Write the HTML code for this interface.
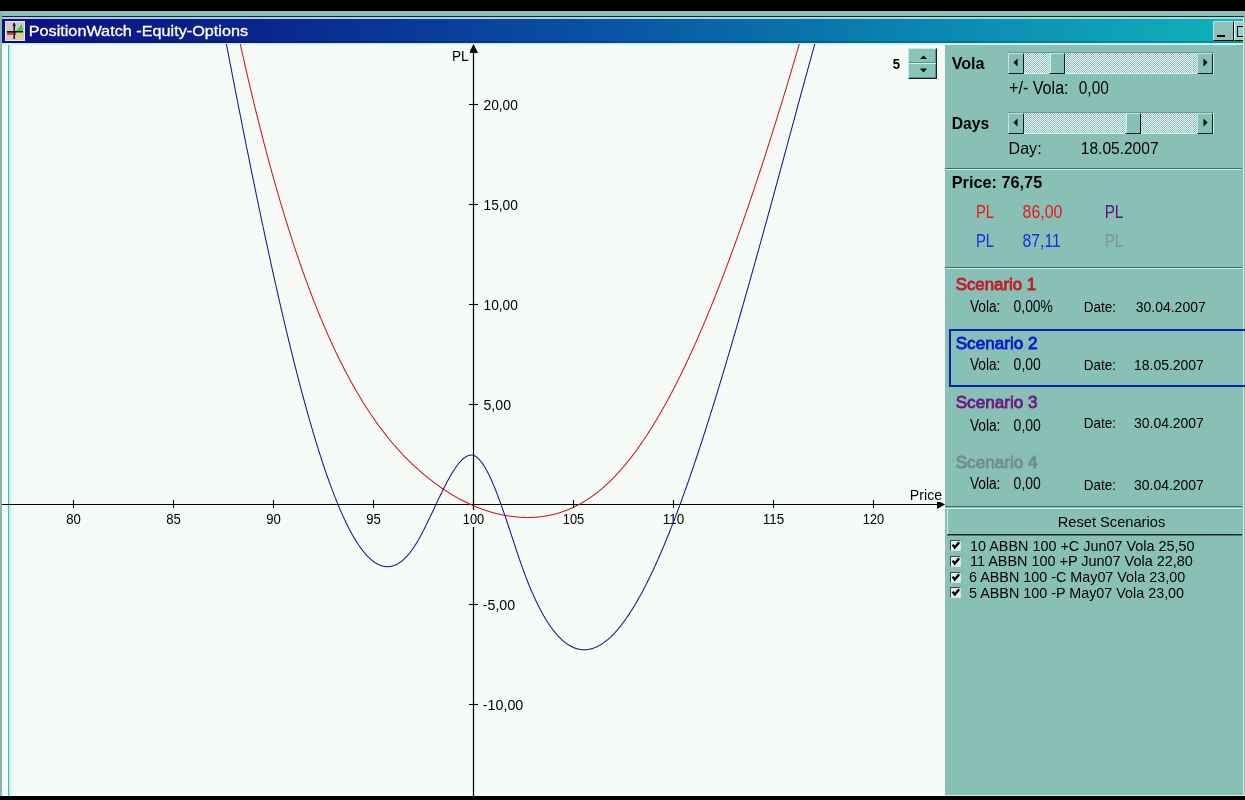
<!DOCTYPE html>
<html><head><meta charset="utf-8"><style>
*{margin:0;padding:0;box-sizing:border-box}
html,body{width:1245px;height:800px;overflow:hidden;background:#000;font-family:"Liberation Sans",sans-serif}
.a{position:absolute}
#band{left:0;top:11px;width:1245px;height:5px;background:#8cbfb6}
#dl{left:0;top:16px;width:1245px;height:1px;background:#102828}
#ll{left:0;top:17px;width:1245px;height:2px;background:linear-gradient(to right,#b0c8e8,#a8d4e0 50%,#a0dcd4)}
#title{left:2px;top:19px;width:1241px;height:24px;box-shadow:inset 0 -2px rgba(0,0,30,0.18);background:linear-gradient(to right,#0a1084 0%,#0a248c 20%,#0856a4 50%,#0a88b0 75%,#10b2bc 100%)}
#tl{left:2px;top:43px;width:1241px;height:2px;background:linear-gradient(#b8ecec,#e0f8f6)}
#chart{left:2px;top:44px;width:943px;height:752px;background:#f6fbf8}
#lstripe0{left:0;top:11px;width:2px;height:785px;background:#86b8b0}
#lstripe1{left:8px;top:44px;width:1px;height:752px;background:#40c0c0}
#lstripe2{left:9px;top:44px;width:2px;height:752px;background:#b0f4f4}
#panel{left:945px;top:44px;width:298px;height:751px;background:#88c0b6}
#rb{left:1243px;top:17px;width:1px;height:779px;background:#c0f0e8}
#rb2{left:1244px;top:11px;width:1px;height:785px;background:#88c0b6}
#bl{left:945px;top:795px;width:300px;height:1px;background:#c8f0e8}
.t{position:absolute;white-space:nowrap;color:#000}
.sep{position:absolute;left:945px;width:297px;height:2px;border-top:1px solid #407068;border-bottom:1px solid #c8f0e8}
.sb{position:absolute;left:1008px;width:205px;height:21px;background-color:#b8dcd6;background-image:conic-gradient(#eef8f6 25%,#88c0b8 0 50%,#eef8f6 0 75%,#88c0b8 0);background-size:2px 2px;border-bottom:1px solid #d8f4f0;box-shadow:0 -1px #649e96,1px 0 #c8eee8}
.sbb,.sbt{position:absolute;top:0;width:16px;height:21px;background:#88c0b8;border-top:1px solid #b8e8e0;border-left:1px solid #b8e8e0;border-right:1px solid #102020;border-bottom:1px solid #102020}
.sbt{box-shadow:inset 1px 0 #c8f0ea}
.cb{position:absolute;left:950px;width:11px;height:11px;background:#e4eeee;border-top:1px solid #305050;border-left:1px solid #305050;border-right:1px solid #c8ece4;border-bottom:1px solid #c8ece4}
#box2{position:absolute;left:949px;top:329px;width:296px;height:58px;border:2px solid #0a20b0;border-right:none}
#reset{position:absolute;left:947px;top:508px;width:295px;height:27px;border-top:1px solid #c8f0e8;border-left:1px solid #c8f0e8;border-bottom:1px solid #102020;box-shadow:0 1px #4a7a72}
#spin{position:absolute;left:908px;top:48px;width:29px;height:31px;background:#88c4b8;border-top:1px solid #c0f0e8;border-left:1px solid #c0f0e8;border-right:1px solid #102020;border-bottom:1px solid #102020;box-shadow:inset -1px -1px #5a9088}
#minb{position:absolute;left:1213px;top:21px;width:21px;height:20px;background:#90c0b8;border-top:1px solid #a0f0f8;border-left:1px solid #a0f0f8;border-right:1px solid #000;border-bottom:1px solid #000}
#maxb{position:absolute;left:1234px;top:21px;width:9px;height:20px;background:#a0d0c8;border-top:1px solid #c0f0f0;border-left:1px solid #e0ffff;border-bottom:1px solid #000}
</style></head><body>
<div class="a" id="band"></div>
<div class="a" id="dl"></div>
<div class="a" id="ll"></div>
<div class="a" id="title"></div>
<div class="a" id="lstripe0"></div>
<div class="a" id="chart"></div>
<div class="a" id="lstripe1"></div>
<div class="a" id="lstripe2"></div>
<div class="a" id="panel"></div>
<div class="a" id="tl"></div>
<div class="a" id="rb"></div>
<div class="a" id="rb2"></div>
<div class="a" id="bl"></div>
<svg class="a" style="left:5px;top:21px" width="20" height="20">
<rect x="0" y="0" width="20" height="20" fill="#e8e8f0"/>
<rect x="1" y="1" width="18" height="18" fill="#cfcad0"/>
<rect x="11" y="11" width="8" height="8" fill="#d8caa8"/>
<polygon points="11,10 18,10 17,3" fill="#30d040"/>
<rect x="2" y="11" width="9" height="3" fill="#e04030"/>
<rect x="2" y="10" width="16" height="1.5" fill="#101010"/>
<rect x="8.5" y="2" width="1.5" height="16" fill="#101010"/>
<polygon points="9.25,1.5 7.5,5 11,5" fill="#101010"/>
</svg>
<svg class="a" style="left:0;top:0" width="1245" height="800">
<line x1="2" y1="504.5" x2="940" y2="504.5" stroke="#000" stroke-width="1.2"/>
<line x1="473.5" y1="50" x2="473.5" y2="796" stroke="#000" stroke-width="1.2"/>
<g stroke="#000" stroke-width="1.1"><line x1="73.5" y1="500" x2="73.5" y2="508"/><line x1="173.5" y1="500" x2="173.5" y2="508"/><line x1="273.5" y1="500" x2="273.5" y2="508"/><line x1="373.5" y1="500" x2="373.5" y2="508"/><line x1="473.5" y1="500" x2="473.5" y2="508"/><line x1="573.5" y1="500" x2="573.5" y2="508"/><line x1="673.5" y1="500" x2="673.5" y2="508"/><line x1="773.5" y1="500" x2="773.5" y2="508"/><line x1="873.5" y1="500" x2="873.5" y2="508"/><line x1="469" y1="104.5" x2="478" y2="104.5"/><line x1="469" y1="204.5" x2="478" y2="204.5"/><line x1="469" y1="304.5" x2="478" y2="304.5"/><line x1="469" y1="404.5" x2="478" y2="404.5"/><line x1="469" y1="604.5" x2="478" y2="604.5"/><line x1="469" y1="704.5" x2="478" y2="704.5"/></g>
<polygon points="945,504.5 937,500 937,509" fill="#000"/>
<polygon points="473.5,44 469,53 478,53" fill="#000"/>
</svg>
<div class="a" style="left:65.2px;top:510px;width:16.6px;height:17px;background:#f6fbf8"></div><div class="a" style="left:165.2px;top:510px;width:16.6px;height:17px;background:#f6fbf8"></div><div class="a" style="left:265.2px;top:510px;width:16.6px;height:17px;background:#f6fbf8"></div><div class="a" style="left:365.2px;top:510px;width:16.6px;height:17px;background:#f6fbf8"></div><div class="a" style="left:461.8px;top:510px;width:23.5px;height:17px;background:#f6fbf8"></div><div class="a" style="left:561.8px;top:510px;width:23.5px;height:17px;background:#f6fbf8"></div><div class="a" style="left:661.8px;top:510px;width:23.5px;height:17px;background:#f6fbf8"></div><div class="a" style="left:761.8px;top:510px;width:23.5px;height:17px;background:#f6fbf8"></div><div class="a" style="left:861.8px;top:510px;width:23.5px;height:17px;background:#f6fbf8"></div><div class="a" style="left:450px;top:48px;width:20px;height:16px;background:#f6fbf8"></div><div class="a" style="left:908px;top:486px;width:36px;height:16px;background:#f6fbf8"></div>
<svg class="a" style="left:0;top:0;will-change:transform" width="1245" height="800" font-family="Liberation Sans"><text transform="translate(66.20,524) scale(0.8618,1)" font-size="15.26" fill="#000" xml:space="preserve">80</text>
<text transform="translate(166.20,524) scale(0.8618,1)" font-size="15.26" fill="#000" xml:space="preserve">85</text>
<text transform="translate(266.20,524) scale(0.8618,1)" font-size="15.26" fill="#000" xml:space="preserve">90</text>
<text transform="translate(366.20,524) scale(0.8618,1)" font-size="15.26" fill="#000" xml:space="preserve">95</text>
<text transform="translate(462.75,524) scale(0.8436,1)" font-size="15.26" fill="#000" xml:space="preserve">100</text>
<text transform="translate(562.75,524) scale(0.8436,1)" font-size="15.26" fill="#000" xml:space="preserve">105</text>
<text transform="translate(662.75,524) scale(0.8832,1)" font-size="15.26" fill="#000" xml:space="preserve">110</text>
<text transform="translate(762.75,524) scale(0.8832,1)" font-size="15.26" fill="#000" xml:space="preserve">115</text>
<text transform="translate(862.75,524) scale(0.8436,1)" font-size="15.26" fill="#000" xml:space="preserve">120</text>
<text transform="translate(483.50,110) scale(0.8830,1)" font-size="15.55" fill="#000" xml:space="preserve">20,00</text>
<text transform="translate(483.50,210) scale(0.8830,1)" font-size="15.55" fill="#000" xml:space="preserve">15,00</text>
<text transform="translate(483.50,310) scale(0.8830,1)" font-size="15.55" fill="#000" xml:space="preserve">10,00</text>
<text transform="translate(483.50,410) scale(0.9091,1)" font-size="15.55" fill="#000" xml:space="preserve">5,00</text>
<text transform="translate(482.75,610) scale(0.9165,1)" font-size="15.55" fill="#000" xml:space="preserve">-5,00</text>
<text transform="translate(482.75,710) scale(0.9208,1)" font-size="15.55" fill="#000" xml:space="preserve">-10,00</text>

<defs><clipPath id="cc"><rect x="2" y="44" width="943" height="752"/></clipPath></defs>
<g clip-path="url(#cc)">
<polyline points="232.00,5.39 232.50,7.79 233.00,10.17 233.50,12.55 234.00,14.93 234.50,17.29 235.00,19.65 235.50,21.99 236.00,24.33 236.50,26.67 237.00,28.99 237.50,31.31 238.00,33.61 238.50,35.91 239.00,38.21 239.50,40.49 240.00,42.77 240.50,45.03 241.00,47.30 241.50,49.55 242.00,51.79 242.50,54.03 243.00,56.26 243.50,58.48 244.00,60.70 244.50,62.90 245.00,65.10 245.50,67.29 246.00,69.47 246.50,71.65 247.00,73.82 247.50,75.98 248.00,78.13 248.50,80.27 249.00,82.41 249.50,84.54 250.00,86.66 250.50,88.78 251.00,90.88 251.50,92.98 252.00,95.08 252.50,97.16 253.00,99.24 253.50,101.31 254.00,103.37 254.50,105.42 255.00,107.47 255.50,109.51 256.00,111.54 256.50,113.57 257.00,115.59 257.50,117.60 258.00,119.60 258.50,121.60 259.00,123.58 259.50,125.57 260.00,127.54 260.50,129.51 261.00,131.47 261.50,133.42 262.00,135.36 262.50,137.30 263.00,139.23 263.50,141.16 264.00,143.07 264.50,144.98 265.00,146.88 265.50,148.78 266.00,150.67 266.50,152.55 267.00,154.42 267.50,156.29 268.00,158.15 268.50,160.00 269.00,161.85 269.50,163.69 270.00,165.52 270.50,167.34 271.00,169.16 271.50,170.97 272.00,172.78 272.50,174.57 273.00,176.36 273.50,178.15 274.00,179.93 274.50,181.70 275.00,183.46 275.50,185.22 276.00,186.97 276.50,188.71 277.00,190.44 277.50,192.17 278.00,193.90 278.50,195.61 279.00,197.32 279.50,199.03 280.00,200.72 280.50,202.41 281.00,204.09 281.50,205.77 282.00,207.44 282.50,209.10 283.00,210.76 283.50,212.41 284.00,214.05 284.50,215.69 285.00,217.32 285.50,218.95 286.00,220.56 286.50,222.17 287.00,223.78 287.50,225.38 288.00,226.97 288.50,228.56 289.00,230.13 289.50,231.71 290.00,233.27 290.50,234.83 291.00,236.39 291.50,237.94 292.00,239.48 292.50,241.01 293.00,242.54 293.50,244.06 294.00,245.58 294.50,247.09 295.00,248.59 295.50,250.09 296.00,251.58 296.50,253.07 297.00,254.55 297.50,256.02 298.00,257.49 298.50,258.95 299.00,260.41 299.50,261.86 300.00,263.30 300.50,264.74 301.00,266.17 301.50,267.59 302.00,269.01 302.50,270.42 303.00,271.83 303.50,273.23 304.00,274.63 304.50,276.02 305.00,277.40 305.50,278.78 306.00,280.15 306.50,281.52 307.00,282.88 307.50,284.23 308.00,285.58 308.50,286.92 309.00,288.26 309.50,289.59 310.00,290.92 310.50,292.24 311.00,293.55 311.50,294.86 312.00,296.17 312.50,297.46 313.00,298.75 313.50,300.04 314.00,301.32 314.50,302.60 315.00,303.87 315.50,305.13 316.00,306.39 316.50,307.64 317.00,308.89 317.50,310.13 318.00,311.37 318.50,312.60 319.00,313.82 319.50,315.04 320.00,316.26 320.50,317.47 321.00,318.67 321.50,319.87 322.00,321.06 322.50,322.25 323.00,323.43 323.50,324.61 324.00,325.78 324.50,326.95 325.00,328.11 325.50,329.27 326.00,330.42 326.50,331.56 327.00,332.70 327.50,333.84 328.00,334.97 328.50,336.09 329.00,337.21 329.50,338.33 330.00,339.44 330.50,340.54 331.00,341.64 331.50,342.74 332.00,343.83 332.50,344.91 333.00,345.99 333.50,347.07 334.00,348.13 334.50,349.20 335.00,350.26 335.50,351.31 336.00,352.36 336.50,353.41 337.00,354.45 337.50,355.48 338.00,356.51 338.50,357.54 339.00,358.56 339.50,359.57 340.00,360.58 340.50,361.59 341.00,362.59 341.50,363.59 342.00,364.58 342.50,365.57 343.00,366.55 343.50,367.53 344.00,368.50 344.50,369.47 345.00,370.43 345.50,371.39 346.00,372.35 346.50,373.30 347.00,374.24 347.50,375.18 348.00,376.12 348.50,377.05 349.00,377.98 349.50,378.90 350.00,379.82 350.50,380.73 351.00,381.64 351.50,382.55 352.00,383.45 352.50,384.34 353.00,385.24 353.50,386.12 354.00,387.01 354.50,387.88 355.00,388.76 355.50,389.63 356.00,390.49 356.50,391.36 357.00,392.21 357.50,393.07 358.00,393.91 358.50,394.76 359.00,395.60 359.50,396.43 360.00,397.27 360.50,398.09 361.00,398.92 361.50,399.74 362.00,400.55 362.50,401.36 363.00,402.17 363.50,402.97 364.00,403.77 364.50,404.57 365.00,405.36 365.50,406.14 366.00,406.93 366.50,407.70 367.00,408.48 367.50,409.25 368.00,410.02 368.50,410.78 369.00,411.54 369.50,412.29 370.00,413.05 370.50,413.79 371.00,414.54 371.50,415.28 372.00,416.01 372.50,416.74 373.00,417.47 373.50,418.20 374.00,418.92 374.50,419.63 375.00,420.35 375.50,421.06 376.00,421.76 376.50,422.46 377.00,423.16 377.50,423.86 378.00,424.55 378.50,425.24 379.00,425.92 379.50,426.60 380.00,427.28 380.50,427.95 381.00,428.62 381.50,429.28 382.00,429.95 382.50,430.61 383.00,431.26 383.50,431.91 384.00,432.56 384.50,433.21 385.00,433.85 385.50,434.49 386.00,435.12 386.50,435.75 387.00,436.38 387.50,437.00 388.00,437.63 388.50,438.24 389.00,438.86 389.50,439.47 390.00,440.08 390.50,440.68 391.00,441.28 391.50,441.88 392.00,442.48 392.50,443.07 393.00,443.66 393.50,444.24 394.00,444.83 394.50,445.40 395.00,445.98 395.50,446.55 396.00,447.12 396.50,447.69 397.00,448.25 397.50,448.81 398.00,449.37 398.50,449.93 399.00,450.48 399.50,451.03 400.00,451.57 400.50,452.11 401.00,452.65 401.50,453.19 402.00,453.72 402.50,454.25 403.00,454.78 403.50,455.31 404.00,455.83 404.50,456.35 405.00,456.86 405.50,457.38 406.00,457.89 406.50,458.40 407.00,458.90 407.50,459.40 408.00,459.90 408.50,460.40 409.00,460.89 409.50,461.39 410.00,461.87 410.50,462.36 411.00,462.84 411.50,463.32 412.00,463.80 412.50,464.28 413.00,464.75 413.50,465.22 414.00,465.69 414.50,466.15 415.00,466.62 415.50,467.08 416.00,467.54 416.50,467.99 417.00,468.44 417.50,468.89 418.00,469.34 418.50,469.79 419.00,470.23 419.50,470.67 420.00,471.11 420.50,471.54 421.00,471.98 421.50,472.41 422.00,472.84 422.50,473.26 423.00,473.69 423.50,474.11 424.00,474.53 424.50,474.95 425.00,475.36 425.50,475.77 426.00,476.18 426.50,476.59 427.00,477.00 427.50,477.40 428.00,477.80 428.50,478.20 429.00,478.60 429.50,479.00 430.00,479.39 430.50,479.78 431.00,480.17 431.50,480.56 432.00,480.94 432.50,481.33 433.00,481.71 433.50,482.09 434.00,482.46 434.50,482.84 435.00,483.21 435.50,483.58 436.00,483.95 436.50,484.32 437.00,484.68 437.50,485.04 438.00,485.40 438.50,485.76 439.00,486.12 439.50,486.47 440.00,486.82 440.50,487.17 441.00,487.52 441.50,487.87 442.00,488.21 442.50,488.55 443.00,488.89 443.50,489.23 444.00,489.57 444.50,489.90 445.00,490.23 445.50,490.56 446.00,490.89 446.50,491.21 447.00,491.54 447.50,491.86 448.00,492.18 448.50,492.50 449.00,492.81 449.50,493.12 450.00,493.43 450.50,493.74 451.00,494.05 451.50,494.36 452.00,494.66 452.50,494.96 453.00,495.26 453.50,495.55 454.00,495.85 454.50,496.14 455.00,496.43 455.50,496.72 456.00,497.01 456.50,497.29 457.00,497.57 457.50,497.85 458.00,498.13 458.50,498.41 459.00,498.68 459.50,498.96 460.00,499.23 460.50,499.49 461.00,499.76 461.50,500.03 462.00,500.29 462.50,500.55 463.00,500.81 463.50,501.06 464.00,501.32 464.50,501.57 465.00,501.82 465.50,502.07 466.00,502.31 466.50,502.56 467.00,502.80 467.50,503.04 468.00,503.28 468.50,503.51 469.00,503.75 469.50,503.98 470.00,504.21 470.50,504.44 471.00,504.66 471.50,504.89 472.00,505.11 472.50,505.33 473.00,505.55 473.50,505.76 474.00,505.97 474.50,506.19 475.00,506.40 475.50,506.60 476.00,506.81 476.50,507.01 477.00,507.22 477.50,507.42 478.00,507.61 478.50,507.81 479.00,508.00 479.50,508.20 480.00,508.38 480.50,508.57 481.00,508.76 481.50,508.94 482.00,509.12 482.50,509.30 483.00,509.48 483.50,509.66 484.00,509.83 484.50,510.00 485.00,510.17 485.50,510.34 486.00,510.51 486.50,510.67 487.00,510.83 487.50,510.99 488.00,511.15 488.50,511.31 489.00,511.46 489.50,511.61 490.00,511.76 490.50,511.91 491.00,512.06 491.50,512.20 492.00,512.35 492.50,512.49 493.00,512.62 493.50,512.76 494.00,512.89 494.50,513.03 495.00,513.16 495.50,513.29 496.00,513.41 496.50,513.54 497.00,513.66 497.50,513.78 498.00,513.90 498.50,514.02 499.00,514.13 499.50,514.24 500.00,514.35 500.50,514.46 501.00,514.57 501.50,514.67 502.00,514.78 502.50,514.88 503.00,514.98 503.50,515.07 504.00,515.17 504.50,515.26 505.00,515.35 505.50,515.44 506.00,515.53 506.50,515.62 507.00,515.70 507.50,515.78 508.00,515.86 508.50,515.94 509.00,516.01 509.50,516.09 510.00,516.16 510.50,516.23 511.00,516.30 511.50,516.36 512.00,516.43 512.50,516.49 513.00,516.55 513.50,516.61 514.00,516.66 514.50,516.72 515.00,516.77 515.50,516.82 516.00,516.87 516.50,516.91 517.00,516.96 517.50,517.00 518.00,517.04 518.50,517.08 519.00,517.12 519.50,517.15 520.00,517.19 520.50,517.22 521.00,517.24 521.50,517.27 522.00,517.30 522.50,517.32 523.00,517.34 523.50,517.36 524.00,517.38 524.50,517.39 525.00,517.40 525.50,517.41 526.00,517.42 526.50,517.43 527.00,517.43 527.50,517.44 528.00,517.44 528.50,517.44 529.00,517.43 529.50,517.42 530.00,517.42 530.50,517.41 531.00,517.39 531.50,517.38 532.00,517.36 532.50,517.34 533.00,517.32 533.50,517.30 534.00,517.27 534.50,517.24 535.00,517.21 535.50,517.18 536.00,517.14 536.50,517.11 537.00,517.07 537.50,517.02 538.00,516.98 538.50,516.93 539.00,516.88 539.50,516.83 540.00,516.78 540.50,516.72 541.00,516.66 541.50,516.60 542.00,516.54 542.50,516.47 543.00,516.41 543.50,516.34 544.00,516.26 544.50,516.19 545.00,516.11 545.50,516.03 546.00,515.95 546.50,515.86 547.00,515.77 547.50,515.68 548.00,515.59 548.50,515.49 549.00,515.40 549.50,515.30 550.00,515.19 550.50,515.09 551.00,514.98 551.50,514.87 552.00,514.76 552.50,514.64 553.00,514.52 553.50,514.40 554.00,514.28 554.50,514.15 555.00,514.02 555.50,513.89 556.00,513.75 556.50,513.62 557.00,513.48 557.50,513.33 558.00,513.19 558.50,513.04 559.00,512.89 559.50,512.74 560.00,512.58 560.50,512.42 561.00,512.26 561.50,512.09 562.00,511.93 562.50,511.75 563.00,511.58 563.50,511.41 564.00,511.23 564.50,511.05 565.00,510.86 565.50,510.67 566.00,510.48 566.50,510.29 567.00,510.09 567.50,509.89 568.00,509.69 568.50,509.49 569.00,509.28 569.50,509.07 570.00,508.85 570.50,508.64 571.00,508.42 571.50,508.20 572.00,507.97 572.50,507.74 573.00,507.51 573.50,507.27 574.00,507.04 574.50,506.80 575.00,506.55 575.50,506.31 576.00,506.05 576.50,505.80 577.00,505.55 577.50,505.29 578.00,505.02 578.50,504.76 579.00,504.49 579.50,504.22 580.00,503.94 580.50,503.66 581.00,503.38 581.50,503.10 582.00,502.81 582.50,502.52 583.00,502.22 583.50,501.93 584.00,501.63 584.50,501.32 585.00,501.01 585.50,500.70 586.00,500.39 586.50,500.07 587.00,499.75 587.50,499.43 588.00,499.10 588.50,498.77 589.00,498.44 589.50,498.10 590.00,497.76 590.50,497.42 591.00,497.07 591.50,496.72 592.00,496.36 592.50,496.01 593.00,495.64 593.50,495.28 594.00,494.91 594.50,494.54 595.00,494.17 595.50,493.79 596.00,493.41 596.50,493.02 597.00,492.63 597.50,492.24 598.00,491.85 598.50,491.45 599.00,491.04 599.50,490.64 600.00,490.23 600.50,489.81 601.00,489.40 601.50,488.98 602.00,488.55 602.50,488.12 603.00,487.69 603.50,487.26 604.00,486.82 604.50,486.38 605.00,485.93 605.50,485.48 606.00,485.03 606.50,484.57 607.00,484.11 607.50,483.64 608.00,483.18 608.50,482.70 609.00,482.23 609.50,481.75 610.00,481.26 610.50,480.78 611.00,480.29 611.50,479.79 612.00,479.29 612.50,478.79 613.00,478.28 613.50,477.77 614.00,477.26 614.50,476.74 615.00,476.22 615.50,475.70 616.00,475.17 616.50,474.63 617.00,474.10 617.50,473.56 618.00,473.01 618.50,472.47 619.00,471.91 619.50,471.36 620.00,470.80 620.50,470.23 621.00,469.67 621.50,469.10 622.00,468.52 622.50,467.94 623.00,467.36 623.50,466.77 624.00,466.18 624.50,465.59 625.00,464.99 625.50,464.39 626.00,463.79 626.50,463.18 627.00,462.56 627.50,461.95 628.00,461.33 628.50,460.70 629.00,460.07 629.50,459.44 630.00,458.81 630.50,458.17 631.00,457.52 631.50,456.88 632.00,456.23 632.50,455.57 633.00,454.91 633.50,454.25 634.00,453.59 634.50,452.92 635.00,452.24 635.50,451.57 636.00,450.88 636.50,450.20 637.00,449.51 637.50,448.82 638.00,448.12 638.50,447.42 639.00,446.72 639.50,446.01 640.00,445.30 640.50,444.58 641.00,443.87 641.50,443.14 642.00,442.42 642.50,441.69 643.00,440.95 643.50,440.22 644.00,439.47 644.50,438.73 645.00,437.98 645.50,437.23 646.00,436.47 646.50,435.71 647.00,434.95 647.50,434.18 648.00,433.41 648.50,432.63 649.00,431.85 649.50,431.07 650.00,430.28 650.50,429.49 651.00,428.70 651.50,427.90 652.00,427.10 652.50,426.29 653.00,425.49 653.50,424.67 654.00,423.86 654.50,423.04 655.00,422.21 655.50,421.38 656.00,420.55 656.50,419.72 657.00,418.88 657.50,418.03 658.00,417.19 658.50,416.34 659.00,415.48 659.50,414.63 660.00,413.77 660.50,412.90 661.00,412.03 661.50,411.16 662.00,410.28 662.50,409.40 663.00,408.52 663.50,407.63 664.00,406.74 664.50,405.84 665.00,404.95 665.50,404.04 666.00,403.14 666.50,402.23 667.00,401.31 667.50,400.40 668.00,399.47 668.50,398.55 669.00,397.62 669.50,396.69 670.00,395.75 670.50,394.81 671.00,393.87 671.50,392.92 672.00,391.97 672.50,391.02 673.00,390.06 673.50,389.10 674.00,388.13 674.50,387.16 675.00,386.19 675.50,385.21 676.00,384.23 676.50,383.25 677.00,382.26 677.50,381.27 678.00,380.27 678.50,379.27 679.00,378.27 679.50,377.27 680.00,376.26 680.50,375.24 681.00,374.22 681.50,373.20 682.00,372.18 682.50,371.15 683.00,370.12 683.50,369.08 684.00,368.04 684.50,367.00 685.00,365.95 685.50,364.90 686.00,363.85 686.50,362.79 687.00,361.73 687.50,360.66 688.00,359.59 688.50,358.52 689.00,357.45 689.50,356.37 690.00,355.28 690.50,354.20 691.00,353.11 691.50,352.01 692.00,350.91 692.50,349.81 693.00,348.71 693.50,347.60 694.00,346.49 694.50,345.37 695.00,344.25 695.50,343.13 696.00,342.01 696.50,340.88 697.00,339.74 697.50,338.61 698.00,337.47 698.50,336.32 699.00,335.18 699.50,334.03 700.00,332.87 700.50,331.72 701.00,330.56 701.50,329.39 702.00,328.22 702.50,327.05 703.00,325.88 703.50,324.70 704.00,323.52 704.50,322.33 705.00,321.15 705.50,319.96 706.00,318.76 706.50,317.56 707.00,316.36 707.50,315.16 708.00,313.95 708.50,312.74 709.00,311.52 709.50,310.30 710.00,309.08 710.50,307.86 711.00,306.63 711.50,305.40 712.00,304.16 712.50,302.92 713.00,301.68 713.50,300.44 714.00,299.19 714.50,297.94 715.00,296.68 715.50,295.43 716.00,294.17 716.50,292.90 717.00,291.63 717.50,290.36 718.00,289.09 718.50,287.81 719.00,286.53 719.50,285.25 720.00,283.96 720.50,282.67 721.00,281.38 721.50,280.08 722.00,278.78 722.50,277.48 723.00,276.17 723.50,274.87 724.00,273.55 724.50,272.24 725.00,270.92 725.50,269.60 726.00,268.27 726.50,266.95 727.00,265.62 727.50,264.28 728.00,262.95 728.50,261.61 729.00,260.26 729.50,258.92 730.00,257.57 730.50,256.22 731.00,254.86 731.50,253.50 732.00,252.14 732.50,250.78 733.00,249.41 733.50,248.04 734.00,246.66 734.50,245.29 735.00,243.91 735.50,242.53 736.00,241.14 736.50,239.75 737.00,238.36 737.50,236.97 738.00,235.57 738.50,234.17 739.00,232.77 739.50,231.36 740.00,229.95 740.50,228.54 741.00,227.13 741.50,225.71 742.00,224.29 742.50,222.86 743.00,221.44 743.50,220.01 744.00,218.58 744.50,217.14 745.00,215.70 745.50,214.26 746.00,212.82 746.50,211.37 747.00,209.92 747.50,208.47 748.00,207.02 748.50,205.56 749.00,204.10 749.50,202.64 750.00,201.17 750.50,199.70 751.00,198.23 751.50,196.76 752.00,195.28 752.50,193.80 753.00,192.32 753.50,190.83 754.00,189.34 754.50,187.85 755.00,186.36 755.50,184.86 756.00,183.36 756.50,181.86 757.00,180.36 757.50,178.85 758.00,177.34 758.50,175.83 759.00,174.31 759.50,172.80 760.00,171.28 760.50,169.75 761.00,168.23 761.50,166.70 762.00,165.17 762.50,163.63 763.00,162.10 763.50,160.56 764.00,159.02 764.50,157.47 765.00,155.93 765.50,154.38 766.00,152.83 766.50,151.27 767.00,149.72 767.50,148.16 768.00,146.59 768.50,145.03 769.00,143.46 769.50,141.89 770.00,140.32 770.50,138.75 771.00,137.17 771.50,135.59 772.00,134.01 772.50,132.42 773.00,130.84 773.50,129.25 774.00,127.66 774.50,126.06 775.00,124.46 775.50,122.86 776.00,121.26 776.50,119.66 777.00,118.05 777.50,116.44 778.00,114.83 778.50,113.22 779.00,111.60 779.50,109.98 780.00,108.36 780.50,106.74 781.00,105.11 781.50,103.48 782.00,101.85 782.50,100.22 783.00,98.59 783.50,96.95 784.00,95.31 784.50,93.67 785.00,92.02 785.50,90.38 786.00,88.73 786.50,87.07 787.00,85.42 787.50,83.76 788.00,82.11 788.50,80.45 789.00,78.78 789.50,77.12 790.00,75.45 790.50,73.78 791.00,72.11 791.50,70.44 792.00,68.76 792.50,67.08 793.00,65.40 793.50,63.72 794.00,62.03 794.50,60.35 795.00,58.66 795.50,56.96 796.00,55.27 796.50,53.57 797.00,51.88 797.50,50.18 798.00,48.47 798.50,46.77 799.00,45.06 799.50,43.35 800.00,41.64 800.50,39.93 801.00,38.21 801.50,36.50 802.00,34.78 802.50,33.06 803.00,31.33 803.50,29.61 804.00,27.88 804.50,26.15 805.00,24.42 805.50,22.68 806.00,20.95" fill="none" stroke="#c81a1a" stroke-width="1.05"/>
<polyline points="220.00,10.85 220.50,13.47 221.00,16.08 221.50,18.69 222.00,21.30 222.50,23.90 223.00,26.51 223.50,29.11 224.00,31.72 224.50,34.32 225.00,36.92 225.50,39.51 226.00,42.11 226.50,44.70 227.00,47.29 227.50,49.88 228.00,52.47 228.50,55.06 229.00,57.64 229.50,60.23 230.00,62.81 230.50,65.38 231.00,67.96 231.50,70.53 232.00,73.10 232.50,75.67 233.00,78.24 233.50,80.80 234.00,83.37 234.50,85.92 235.00,88.48 235.50,91.04 236.00,93.59 236.50,96.14 237.00,98.68 237.50,101.23 238.00,103.77 238.50,106.31 239.00,108.84 239.50,111.38 240.00,113.91 240.50,116.43 241.00,118.96 241.50,121.48 242.00,124.00 242.50,126.51 243.00,129.02 243.50,131.53 244.00,134.04 244.50,136.54 245.00,139.04 245.50,141.54 246.00,144.03 246.50,146.52 247.00,149.00 247.50,151.49 248.00,153.97 248.50,156.44 249.00,158.91 249.50,161.38 250.00,163.84 250.50,166.31 251.00,168.76 251.50,171.22 252.00,173.67 252.50,176.11 253.00,178.55 253.50,180.99 254.00,183.42 254.50,185.85 255.00,188.28 255.50,190.70 256.00,193.12 256.50,195.53 257.00,197.94 257.50,200.35 258.00,202.75 258.50,205.14 259.00,207.54 259.50,209.92 260.00,212.31 260.50,214.69 261.00,217.06 261.50,219.43 262.00,221.79 262.50,224.16 263.00,226.51 263.50,228.86 264.00,231.21 264.50,233.55 265.00,235.89 265.50,238.22 266.00,240.55 266.50,242.87 267.00,245.18 267.50,247.50 268.00,249.80 268.50,252.11 269.00,254.40 269.50,256.69 270.00,258.98 270.50,261.26 271.00,263.54 271.50,265.81 272.00,268.07 272.50,270.33 273.00,272.59 273.50,274.84 274.00,277.08 274.50,279.32 275.00,281.55 275.50,283.78 276.00,286.00 276.50,288.21 277.00,290.42 277.50,292.62 278.00,294.82 278.50,297.01 279.00,299.20 279.50,301.38 280.00,303.55 280.50,305.72 281.00,307.88 281.50,310.04 282.00,312.19 282.50,314.33 283.00,316.47 283.50,318.60 284.00,320.72 284.50,322.84 285.00,324.95 285.50,327.06 286.00,329.16 286.50,331.25 287.00,333.34 287.50,335.41 288.00,337.49 288.50,339.55 289.00,341.61 289.50,343.67 290.00,345.71 290.50,347.75 291.00,349.78 291.50,351.81 292.00,353.83 292.50,355.84 293.00,357.84 293.50,359.84 294.00,361.83 294.50,363.81 295.00,365.79 295.50,367.76 296.00,369.72 296.50,371.67 297.00,373.62 297.50,375.56 298.00,377.49 298.50,379.41 299.00,381.33 299.50,383.24 300.00,385.14 300.50,387.04 301.00,388.92 301.50,390.80 302.00,392.67 302.50,394.54 303.00,396.39 303.50,398.24 304.00,400.08 304.50,401.91 305.00,403.74 305.50,405.55 306.00,407.36 306.50,409.16 307.00,410.95 307.50,412.74 308.00,414.51 308.50,416.28 309.00,418.04 309.50,419.79 310.00,421.53 310.50,423.27 311.00,424.99 311.50,426.71 312.00,428.42 312.50,430.12 313.00,431.81 313.50,433.50 314.00,435.17 314.50,436.84 315.00,438.49 315.50,440.14 316.00,441.78 316.50,443.41 317.00,445.03 317.50,446.65 318.00,448.25 318.50,449.84 319.00,451.43 319.50,453.01 320.00,454.57 320.50,456.13 321.00,457.68 321.50,459.22 322.00,460.75 322.50,462.27 323.00,463.79 323.50,465.29 324.00,466.78 324.50,468.27 325.00,469.74 325.50,471.20 326.00,472.66 326.50,474.11 327.00,475.54 327.50,476.97 328.00,478.38 328.50,479.79 329.00,481.19 329.50,482.57 330.00,483.95 330.50,485.32 331.00,486.67 331.50,488.02 332.00,489.36 332.50,490.68 333.00,492.00 333.50,493.31 334.00,494.60 334.50,495.89 335.00,497.17 335.50,498.43 336.00,499.69 336.50,500.93 337.00,502.17 337.50,503.39 338.00,504.60 338.50,505.80 339.00,507.00 339.50,508.18 340.00,509.35 340.50,510.51 341.00,511.66 341.50,512.80 342.00,513.92 342.50,515.04 343.00,516.15 343.50,517.24 344.00,518.32 344.50,519.40 345.00,520.46 345.50,521.51 346.00,522.55 346.50,523.58 347.00,524.59 347.50,525.60 348.00,526.59 348.50,527.58 349.00,528.55 349.50,529.51 350.00,530.46 350.50,531.39 351.00,532.32 351.50,533.23 352.00,534.14 352.50,535.03 353.00,535.91 353.50,536.77 354.00,537.63 354.50,538.47 355.00,539.30 355.50,540.12 356.00,540.93 356.50,541.73 357.00,542.51 357.50,543.28 358.00,544.05 358.50,544.79 359.00,545.53 359.50,546.25 360.00,546.96 360.50,547.66 361.00,548.35 361.50,549.03 362.00,549.69 362.50,550.34 363.00,550.98 363.50,551.61 364.00,552.22 364.50,552.82 365.00,553.41 365.50,553.99 366.00,554.55 366.50,555.10 367.00,555.64 367.50,556.17 368.00,556.68 368.50,557.19 369.00,557.67 369.50,558.15 370.00,558.62 370.50,559.07 371.00,559.51 371.50,559.93 372.00,560.34 372.50,560.74 373.00,561.13 373.50,561.51 374.00,561.87 374.50,562.22 375.00,562.56 375.50,562.88 376.00,563.19 376.50,563.49 377.00,563.77 377.50,564.04 378.00,564.30 378.50,564.55 379.00,564.78 379.50,565.00 380.00,565.20 380.50,565.40 381.00,565.58 381.50,565.74 382.00,565.90 382.50,566.04 383.00,566.16 383.50,566.28 384.00,566.38 384.50,566.46 385.00,566.54 385.50,566.60 386.00,566.64 386.50,566.68 387.00,566.70 387.50,566.70 388.00,566.70 388.50,566.67 389.00,566.64 389.50,566.59 390.00,566.53 390.50,566.45 391.00,566.37 391.50,566.26 392.00,566.15 392.50,566.02 393.00,565.87 393.50,565.71 394.00,565.54 394.50,565.36 395.00,565.16 395.50,564.94 396.00,564.72 396.50,564.47 397.00,564.22 397.50,563.95 398.00,563.67 398.50,563.37 399.00,563.06 399.50,562.73 400.00,562.39 400.50,562.04 401.00,561.67 401.50,561.29 402.00,560.89 402.50,560.48 403.00,560.05 403.50,559.61 404.00,559.16 404.50,558.69 405.00,558.21 405.50,557.71 406.00,557.20 406.50,556.67 407.00,556.13 407.50,555.58 408.00,555.01 408.50,554.43 409.00,553.83 409.50,553.21 410.00,552.59 410.50,551.94 411.00,551.29 411.50,550.61 412.00,549.93 412.50,549.23 413.00,548.51 413.50,547.78 414.00,547.03 414.50,546.27 415.00,545.49 415.50,544.70 416.00,543.90 416.50,543.08 417.00,542.25 417.50,541.40 418.00,540.55 418.50,539.68 419.00,538.79 419.50,537.90 420.00,537.00 420.50,536.08 421.00,535.16 421.50,534.22 422.00,533.27 422.50,532.32 423.00,531.35 423.50,530.38 424.00,529.40 424.50,528.41 425.00,527.42 425.50,526.42 426.00,525.41 426.50,524.39 427.00,523.37 427.50,522.34 428.00,521.31 428.50,520.27 429.00,519.23 429.50,518.19 430.00,517.14 430.50,516.09 431.00,515.03 431.50,513.97 432.00,512.92 432.50,511.85 433.00,510.79 433.50,509.73 434.00,508.67 434.50,507.60 435.00,506.54 435.50,505.47 436.00,504.41 436.50,503.35 437.00,502.29 437.50,501.24 438.00,500.18 438.50,499.13 439.00,498.08 439.50,497.04 440.00,495.99 440.50,494.96 441.00,493.93 441.50,492.90 442.00,491.88 442.50,490.86 443.00,489.86 443.50,488.85 444.00,487.86 444.50,486.87 445.00,485.89 445.50,484.92 446.00,483.95 446.50,483.00 447.00,482.06 447.50,481.12 448.00,480.19 448.50,479.28 449.00,478.38 449.50,477.48 450.00,476.60 450.50,475.73 451.00,474.88 451.50,474.03 452.00,473.20 452.50,472.38 453.00,471.58 453.50,470.79 454.00,470.01 454.50,469.25 455.00,468.51 455.50,467.78 456.00,467.07 456.50,466.37 457.00,465.69 457.50,465.03 458.00,464.39 458.50,463.76 459.00,463.15 459.50,462.56 460.00,461.99 460.50,461.44 461.00,460.91 461.50,460.40 462.00,459.91 462.50,459.45 463.00,459.00 463.50,458.57 464.00,458.17 464.50,457.79 465.00,457.43 465.50,457.10 466.00,456.79 466.50,456.50 467.00,456.24 467.50,456.01 468.00,455.80 468.50,455.61 469.00,455.45 469.50,455.32 470.00,455.21 470.50,455.13 471.00,455.08 471.50,455.05 472.00,455.06 472.50,455.09 473.00,455.15 473.50,455.24 474.00,455.46 474.50,455.70 475.00,455.98 475.50,456.28 476.00,456.62 476.50,456.98 477.00,457.38 477.50,457.81 478.00,458.26 478.50,458.75 479.00,459.26 479.50,459.81 480.00,460.38 480.50,460.98 481.00,461.60 481.50,462.25 482.00,462.93 482.50,463.64 483.00,464.37 483.50,465.12 484.00,465.90 484.50,466.70 485.00,467.53 485.50,468.38 486.00,469.26 486.50,470.16 487.00,471.08 487.50,472.02 488.00,472.98 488.50,473.97 489.00,474.97 489.50,476.00 490.00,477.05 490.50,478.11 491.00,479.20 491.50,480.30 492.00,481.42 492.50,482.57 493.00,483.72 493.50,484.90 494.00,486.09 494.50,487.30 495.00,488.53 495.50,489.77 496.00,491.02 496.50,492.29 497.00,493.58 497.50,494.88 498.00,496.19 498.50,497.52 499.00,498.86 499.50,500.21 500.00,501.58 500.50,502.95 501.00,504.34 501.50,505.74 502.00,507.15 502.50,508.57 503.00,510.00 503.50,511.44 504.00,512.88 504.50,514.34 505.00,515.80 505.50,517.28 506.00,518.76 506.50,520.24 507.00,521.73 507.50,523.23 508.00,524.73 508.50,526.24 509.00,527.75 509.50,529.26 510.00,530.78 510.50,532.30 511.00,533.82 511.50,535.34 512.00,536.86 512.50,538.38 513.00,539.90 513.50,541.42 514.00,542.94 514.50,544.45 515.00,545.96 515.50,547.47 516.00,548.98 516.50,550.48 517.00,551.97 517.50,553.46 518.00,554.94 518.50,556.42 519.00,557.88 519.50,559.34 520.00,560.79 520.50,562.24 521.00,563.67 521.50,565.09 522.00,566.50 522.50,567.90 523.00,569.29 523.50,570.67 524.00,572.03 524.50,573.38 525.00,574.72 525.50,576.04 526.00,577.35 526.50,578.65 527.00,579.94 527.50,581.21 528.00,582.47 528.50,583.72 529.00,584.95 529.50,586.18 530.00,587.39 530.50,588.58 531.00,589.77 531.50,590.94 532.00,592.10 532.50,593.25 533.00,594.38 533.50,595.50 534.00,596.61 534.50,597.71 535.00,598.80 535.50,599.87 536.00,600.93 536.50,601.98 537.00,603.02 537.50,604.04 538.00,605.05 538.50,606.05 539.00,607.04 539.50,608.02 540.00,608.98 540.50,609.93 541.00,610.87 541.50,611.80 542.00,612.71 542.50,613.62 543.00,614.51 543.50,615.39 544.00,616.26 544.50,617.11 545.00,617.96 545.50,618.79 546.00,619.61 546.50,620.42 547.00,621.22 547.50,622.01 548.00,622.78 548.50,623.54 549.00,624.30 549.50,625.03 550.00,625.76 550.50,626.48 551.00,627.19 551.50,627.88 552.00,628.56 552.50,629.23 553.00,629.89 553.50,630.54 554.00,631.18 554.50,631.80 555.00,632.42 555.50,633.02 556.00,633.61 556.50,634.19 557.00,634.76 557.50,635.32 558.00,635.87 558.50,636.41 559.00,636.93 559.50,637.45 560.00,637.95 560.50,638.44 561.00,638.93 561.50,639.40 562.00,639.86 562.50,640.31 563.00,640.74 563.50,641.17 564.00,641.59 564.50,642.00 565.00,642.39 565.50,642.78 566.00,643.15 566.50,643.51 567.00,643.87 567.50,644.21 568.00,644.54 568.50,644.86 569.00,645.17 569.50,645.47 570.00,645.76 570.50,646.04 571.00,646.31 571.50,646.57 572.00,646.82 572.50,647.06 573.00,647.28 573.50,647.50 574.00,647.71 574.50,647.91 575.00,648.09 575.50,648.27 576.00,648.44 576.50,648.59 577.00,648.74 577.50,648.88 578.00,649.00 578.50,649.12 579.00,649.23 579.50,649.32 580.00,649.41 580.50,649.49 581.00,649.56 581.50,649.61 582.00,649.66 582.50,649.70 583.00,649.73 583.50,649.75 584.00,649.75 584.50,649.75 585.00,649.74 585.50,649.72 586.00,649.69 586.50,649.65 587.00,649.61 587.50,649.55 588.00,649.48 588.50,649.40 589.00,649.32 589.50,649.22 590.00,649.12 590.50,649.00 591.00,648.88 591.50,648.75 592.00,648.60 592.50,648.45 593.00,648.29 593.50,648.12 594.00,647.94 594.50,647.75 595.00,647.56 595.50,647.35 596.00,647.14 596.50,646.91 597.00,646.68 597.50,646.44 598.00,646.19 598.50,645.93 599.00,645.66 599.50,645.38 600.00,645.09 600.50,644.80 601.00,644.49 601.50,644.18 602.00,643.86 602.50,643.53 603.00,643.19 603.50,642.84 604.00,642.49 604.50,642.12 605.00,641.75 605.50,641.37 606.00,640.98 606.50,640.58 607.00,640.18 607.50,639.76 608.00,639.34 608.50,638.90 609.00,638.46 609.50,638.02 610.00,637.56 610.50,637.09 611.00,636.62 611.50,636.14 612.00,635.65 612.50,635.15 613.00,634.65 613.50,634.13 614.00,633.61 614.50,633.08 615.00,632.54 615.50,632.00 616.00,631.44 616.50,630.88 617.00,630.31 617.50,629.73 618.00,629.15 618.50,628.56 619.00,627.95 619.50,627.35 620.00,626.73 620.50,626.11 621.00,625.47 621.50,624.83 622.00,624.19 622.50,623.53 623.00,622.87 623.50,622.20 624.00,621.52 624.50,620.84 625.00,620.15 625.50,619.45 626.00,618.74 626.50,618.03 627.00,617.30 627.50,616.58 628.00,615.84 628.50,615.10 629.00,614.35 629.50,613.59 630.00,612.82 630.50,612.05 631.00,611.27 631.50,610.48 632.00,609.69 632.50,608.89 633.00,608.08 633.50,607.27 634.00,606.45 634.50,605.62 635.00,604.78 635.50,603.94 636.00,603.09 636.50,602.23 637.00,601.37 637.50,600.50 638.00,599.63 638.50,598.74 639.00,597.85 639.50,596.96 640.00,596.05 640.50,595.14 641.00,594.23 641.50,593.31 642.00,592.38 642.50,591.44 643.00,590.50 643.50,589.55 644.00,588.59 644.50,587.63 645.00,586.66 645.50,585.69 646.00,584.71 646.50,583.72 647.00,582.73 647.50,581.73 648.00,580.72 648.50,579.71 649.00,578.69 649.50,577.67 650.00,576.64 650.50,575.60 651.00,574.56 651.50,573.51 652.00,572.46 652.50,571.40 653.00,570.33 653.50,569.26 654.00,568.18 654.50,567.10 655.00,566.01 655.50,564.91 656.00,563.81 656.50,562.70 657.00,561.59 657.50,560.47 658.00,559.35 658.50,558.22 659.00,557.08 659.50,555.94 660.00,554.79 660.50,553.64 661.00,552.48 661.50,551.32 662.00,550.15 662.50,548.97 663.00,547.79 663.50,546.61 664.00,545.42 664.50,544.22 665.00,543.02 665.50,541.81 666.00,540.60 666.50,539.38 667.00,538.16 667.50,536.93 668.00,535.69 668.50,534.45 669.00,533.21 669.50,531.96 670.00,530.71 670.50,529.45 671.00,528.18 671.50,526.91 672.00,525.64 672.50,524.36 673.00,523.07 673.50,521.78 674.00,520.49 674.50,519.19 675.00,517.88 675.50,516.57 676.00,515.26 676.50,513.94 677.00,512.62 677.50,511.29 678.00,509.95 678.50,508.62 679.00,507.27 679.50,505.92 680.00,504.57 680.50,503.22 681.00,501.85 681.50,500.49 682.00,499.12 682.50,497.74 683.00,496.36 683.50,494.98 684.00,493.59 684.50,492.19 685.00,490.80 685.50,489.39 686.00,487.99 686.50,486.58 687.00,485.16 687.50,483.74 688.00,482.32 688.50,480.89 689.00,479.46 689.50,478.02 690.00,476.58 690.50,475.14 691.00,473.69 691.50,472.23 692.00,470.78 692.50,469.32 693.00,467.85 693.50,466.38 694.00,464.91 694.50,463.43 695.00,461.95 695.50,460.46 696.00,458.98 696.50,457.48 697.00,455.99 697.50,454.49 698.00,452.98 698.50,451.47 699.00,449.96 699.50,448.45 700.00,446.93 700.50,445.40 701.00,443.88 701.50,442.35 702.00,440.81 702.50,439.27 703.00,437.73 703.50,436.19 704.00,434.64 704.50,433.09 705.00,431.53 705.50,429.98 706.00,428.41 706.50,426.85 707.00,425.28 707.50,423.71 708.00,422.13 708.50,420.55 709.00,418.97 709.50,417.39 710.00,415.80 710.50,414.21 711.00,412.61 711.50,411.01 712.00,409.41 712.50,407.81 713.00,406.20 713.50,404.59 714.00,402.98 714.50,401.36 715.00,399.74 715.50,398.12 716.00,396.49 716.50,394.86 717.00,393.23 717.50,391.60 718.00,389.96 718.50,388.32 719.00,386.68 719.50,385.03 720.00,383.39 720.50,381.74 721.00,380.08 721.50,378.43 722.00,376.77 722.50,375.11 723.00,373.44 723.50,371.77 724.00,370.11 724.50,368.43 725.00,366.76 725.50,365.08 726.00,363.40 726.50,361.72 727.00,360.04 727.50,358.35 728.00,356.66 728.50,354.97 729.00,353.28 729.50,351.58 730.00,349.88 730.50,348.18 731.00,346.48 731.50,344.78 732.00,343.07 732.50,341.36 733.00,339.65 733.50,337.94 734.00,336.22 734.50,334.50 735.00,332.78 735.50,331.06 736.00,329.34 736.50,327.61 737.00,325.89 737.50,324.16 738.00,322.43 738.50,320.69 739.00,318.96 739.50,317.22 740.00,315.48 740.50,313.74 741.00,312.00 741.50,310.26 742.00,308.51 742.50,306.77 743.00,305.02 743.50,303.27 744.00,301.51 744.50,299.76 745.00,298.00 745.50,296.25 746.00,294.49 746.50,292.73 747.00,290.96 747.50,289.20 748.00,287.44 748.50,285.67 749.00,283.90 749.50,282.13 750.00,280.36 750.50,278.59 751.00,276.81 751.50,275.03 752.00,273.26 752.50,271.48 753.00,269.70 753.50,267.91 754.00,266.13 754.50,264.35 755.00,262.56 755.50,260.77 756.00,258.98 756.50,257.19 757.00,255.40 757.50,253.61 758.00,251.81 758.50,250.02 759.00,248.22 759.50,246.42 760.00,244.62 760.50,242.82 761.00,241.02 761.50,239.21 762.00,237.41 762.50,235.60 763.00,233.79 763.50,231.99 764.00,230.18 764.50,228.36 765.00,226.55 765.50,224.74 766.00,222.92 766.50,221.11 767.00,219.29 767.50,217.47 768.00,215.65 768.50,213.83 769.00,212.01 769.50,210.19 770.00,208.37 770.50,206.54 771.00,204.72 771.50,202.89 772.00,201.07 772.50,199.24 773.00,197.41 773.50,195.58 774.00,193.75 774.50,191.91 775.00,190.08 775.50,188.25 776.00,186.41 776.50,184.58 777.00,182.74 777.50,180.90 778.00,179.07 778.50,177.23 779.00,175.39 779.50,173.55 780.00,171.70 780.50,169.86 781.00,168.02 781.50,166.18 782.00,164.33 782.50,162.49 783.00,160.64 783.50,158.80 784.00,156.95 784.50,155.10 785.00,153.26 785.50,151.41 786.00,149.56 786.50,147.71 787.00,145.87 787.50,144.02 788.00,142.17 788.50,140.32 789.00,138.47 789.50,136.62 790.00,134.78 790.50,132.93 791.00,131.08 791.50,129.23 792.00,127.38 792.50,125.54 793.00,123.69 793.50,121.84 794.00,120.00 794.50,118.15 795.00,116.31 795.50,114.46 796.00,112.62 796.50,110.77 797.00,108.93 797.50,107.09 798.00,105.25 798.50,103.40 799.00,101.56 799.50,99.73 800.00,97.89 800.50,96.05 801.00,94.21 801.50,92.38 802.00,90.54 802.50,88.71 803.00,86.88 803.50,85.05 804.00,83.22 804.50,81.39 805.00,79.56 805.50,77.74 806.00,75.91 806.50,74.09 807.00,72.27 807.50,70.45 808.00,68.63 808.50,66.81 809.00,65.00 809.50,63.19 810.00,61.37 810.50,59.56 811.00,57.76 811.50,55.95 812.00,54.15 812.50,52.34 813.00,50.54 813.50,48.74 814.00,46.95 814.50,45.15 815.00,43.36 815.50,41.57 816.00,39.78 816.50,38.00 817.00,36.22 817.50,34.44 818.00,32.66 818.50,30.88 819.00,29.11 819.50,27.34 820.00,25.57 820.50,23.80 821.00,22.04 821.50,20.28 822.00,18.52" fill="none" stroke="#16168e" stroke-width="1.05"/>
</g>
</svg>
<div id="spin"><div style="position:absolute;left:0;top:14px;width:27px;height:1px;background:#c8f4ec"></div><div style="position:absolute;left:0;top:13px;width:27px;height:1px;background:#5a9088"></div>
<svg width="27" height="29" style="position:absolute;left:0;top:0"><path d="M11 10 L14.5 6.5 L18 10 Z" fill="#000"/><path d="M11 19.5 L14.5 23.5 L18 19.5 Z" fill="#000"/></svg></div>
<div id="minb"><div style="position:absolute;left:3px;top:13px;width:8px;height:2px;background:#000"></div></div>
<div id="maxb"><div style="position:absolute;left:2px;top:4px;width:6px;height:11px;border:1.5px solid #000;border-right:none"></div></div>
<div class="sb" style="top:53px">
<div class="sbb" style="left:0"><svg width="16" height="21" style="position:absolute;left:0;top:0"><path d="M4.5 8.5 L8.5 4.5 L8.5 12.5 Z" fill="#000"/></svg></div>
<div class="sbt" style="left:41px"></div>
<div class="sbb" style="left:189px"><svg width="16" height="21" style="position:absolute;left:0;top:0"><path d="M9.5 8.5 L5.5 4.5 L5.5 12.5 Z" fill="#000"/></svg></div>
</div>
<div class="sb" style="top:113px">
<div class="sbb" style="left:0"><svg width="16" height="21" style="position:absolute;left:0;top:0"><path d="M4.5 8.5 L8.5 4.5 L8.5 12.5 Z" fill="#000"/></svg></div>
<div class="sbt" style="left:117px"></div>
<div class="sbb" style="left:189px"><svg width="16" height="21" style="position:absolute;left:0;top:0"><path d="M9.5 8.5 L5.5 4.5 L5.5 12.5 Z" fill="#000"/></svg></div>
</div>
<div class="sep" style="top:168px"></div>
<div class="sep" style="top:267px"></div>
<div id="box2"></div>
<div class="sep" style="top:506px;height:3px"></div>
<div id="reset"></div>
<div class="cb" style="top:540.0px"><svg width="11" height="11" style="position:absolute;left:-1px;top:-1px;overflow:visible"><path d="M2.6 4.6 L4.8 7.6 L9.2 2.2" fill="none" stroke="#000" stroke-width="2.4"/></svg></div>
<div class="cb" style="top:555.8px"><svg width="11" height="11" style="position:absolute;left:-1px;top:-1px;overflow:visible"><path d="M2.6 4.6 L4.8 7.6 L9.2 2.2" fill="none" stroke="#000" stroke-width="2.4"/></svg></div>
<div class="cb" style="top:571.5px"><svg width="11" height="11" style="position:absolute;left:-1px;top:-1px;overflow:visible"><path d="M2.6 4.6 L4.8 7.6 L9.2 2.2" fill="none" stroke="#000" stroke-width="2.4"/></svg></div>
<div class="cb" style="top:587.2px"><svg width="11" height="11" style="position:absolute;left:-1px;top:-1px;overflow:visible"><path d="M2.6 4.6 L4.8 7.6 L9.2 2.2" fill="none" stroke="#000" stroke-width="2.4"/></svg></div>

<svg class="a" style="left:0;top:0;will-change:transform" width="1245" height="800" font-family="Liberation Sans"><text transform="translate(28.70,36) scale(1.1176,1)" font-size="14.53" fill="#fff" stroke="#fff" stroke-width="0.3" xml:space="preserve">PositionWatch -Equity-Options</text>
<text transform="translate(451.90,61) scale(0.9100,1)" font-size="15.12" fill="#000" xml:space="preserve">PL</text>
<text transform="translate(909.80,500) scale(0.9252,1)" font-size="15.41" fill="#000" xml:space="preserve">Price</text>
<text transform="translate(892.70,69) scale(0.8537,1)" font-size="15.41" fill="#000" font-weight="bold" xml:space="preserve">5</text>
<text transform="translate(951.70,69) scale(0.9654,1)" font-size="16.72" fill="#000" font-weight="bold" xml:space="preserve">Vola</text>
<text transform="translate(1009.00,94) scale(0.9248,1)" font-size="17.44" fill="#000" xml:space="preserve">+/- Vola:</text>
<text transform="translate(1078.80,94) scale(0.8843,1)" font-size="17.44" fill="#000" xml:space="preserve">0,00</text>
<text transform="translate(951.70,129) scale(0.9814,1)" font-size="15.99" fill="#000" font-weight="bold" xml:space="preserve">Days</text>
<text transform="translate(1008.60,154) scale(0.9607,1)" font-size="16.72" fill="#000" xml:space="preserve">Day:</text>
<text transform="translate(1080.80,154) scale(0.9300,1)" font-size="16.72" fill="#000" xml:space="preserve">18.05.2007</text>
<text transform="translate(951.70,188) scale(1.0100,1)" font-size="16.13" fill="#000" font-weight="bold" xml:space="preserve">Price: 76,75</text>
<text transform="translate(975.90,218) scale(0.8401,1)" font-size="17.59" fill="#e81818" xml:space="preserve">PL</text>
<text transform="translate(1022.60,218) scale(0.9034,1)" font-size="17.59" fill="#e81818" xml:space="preserve">86,00</text>
<text transform="translate(1104.70,218) scale(0.8633,1)" font-size="17.59" fill="#601080" xml:space="preserve">PL</text>
<text transform="translate(975.90,247) scale(0.8265,1)" font-size="17.88" fill="#1030e0" xml:space="preserve">PL</text>
<text transform="translate(1022.60,247) scale(0.8816,1)" font-size="17.88" fill="#1030e0" xml:space="preserve">87,11</text>
<text transform="translate(1104.70,247) scale(0.8493,1)" font-size="17.88" fill="#7a9898" xml:space="preserve">PL</text>
<text transform="translate(955.70,290) scale(1.0063,1)" font-size="16.72" fill="#c41a26" stroke="#c41a26" stroke-width="0.8" xml:space="preserve">Scenario 1</text>
<text transform="translate(969.90,312) scale(0.8574,1)" font-size="15.99" fill="#000" xml:space="preserve">Vola:</text>
<text transform="translate(1013.60,312) scale(0.8670,1)" font-size="15.99" fill="#000" xml:space="preserve">0,00%</text>
<text transform="translate(1083.70,312) scale(0.8690,1)" font-size="15.55" fill="#000" xml:space="preserve">Date:</text>
<text transform="translate(1135.80,312) scale(0.8993,1)" font-size="15.55" fill="#000" xml:space="preserve">30.04.2007</text>
<text transform="translate(955.70,349) scale(1.0238,1)" font-size="16.72" fill="#0818d0" stroke="#0818d0" stroke-width="0.8" xml:space="preserve">Scenario 2</text>
<text transform="translate(969.90,370) scale(0.8574,1)" font-size="15.99" fill="#000" xml:space="preserve">Vola:</text>
<text transform="translate(1013.60,370) scale(0.8747,1)" font-size="15.99" fill="#000" xml:space="preserve">0,00</text>
<text transform="translate(1083.70,370) scale(0.8690,1)" font-size="15.55" fill="#000" xml:space="preserve">Date:</text>
<text transform="translate(1134.00,370) scale(0.8993,1)" font-size="15.55" fill="#000" xml:space="preserve">18.05.2007</text>
<text transform="translate(955.70,408) scale(1.0238,1)" font-size="16.72" fill="#6e1a80" stroke="#6e1a80" stroke-width="0.8" xml:space="preserve">Scenario 3</text>
<text transform="translate(969.90,431) scale(0.8574,1)" font-size="15.99" fill="#000" xml:space="preserve">Vola:</text>
<text transform="translate(1013.60,431) scale(0.8747,1)" font-size="15.99" fill="#000" xml:space="preserve">0,00</text>
<text transform="translate(1083.70,428) scale(0.8690,1)" font-size="15.55" fill="#000" xml:space="preserve">Date:</text>
<text transform="translate(1134.00,428) scale(0.8993,1)" font-size="15.55" fill="#000" xml:space="preserve">30.04.2007</text>
<text transform="translate(955.70,468) scale(1.0238,1)" font-size="16.72" fill="#6e8e8c" stroke="#6e8e8c" stroke-width="0.8" xml:space="preserve">Scenario 4</text>
<text transform="translate(969.90,489) scale(0.8574,1)" font-size="15.99" fill="#000" xml:space="preserve">Vola:</text>
<text transform="translate(1013.60,489) scale(0.8747,1)" font-size="15.99" fill="#000" xml:space="preserve">0,00</text>
<text transform="translate(1083.70,490) scale(0.8690,1)" font-size="15.55" fill="#000" xml:space="preserve">Date:</text>
<text transform="translate(1134.00,490) scale(0.8993,1)" font-size="15.55" fill="#000" xml:space="preserve">30.04.2007</text>
<text transform="translate(1057.80,527) scale(1.0083,1)" font-size="14.53" fill="#000" xml:space="preserve">Reset Scenarios</text>
<text transform="translate(970.00,551) scale(0.9528,1)" font-size="15.12" fill="#000" xml:space="preserve">10 ABBN 100 +C Jun07 Vola 25,50</text>
<text transform="translate(970.00,566) scale(0.9548,1)" font-size="15.12" fill="#000" xml:space="preserve">11 ABBN 100 +P Jun07 Vola 22,80</text>
<text transform="translate(969.00,582) scale(0.9494,1)" font-size="15.12" fill="#000" xml:space="preserve">6 ABBN 100 -C May07 Vola 23,00</text>
<text transform="translate(969.00,598) scale(0.9493,1)" font-size="15.12" fill="#000" xml:space="preserve">5 ABBN 100 -P May07 Vola 23,00</text>
</svg>
</body></html>
